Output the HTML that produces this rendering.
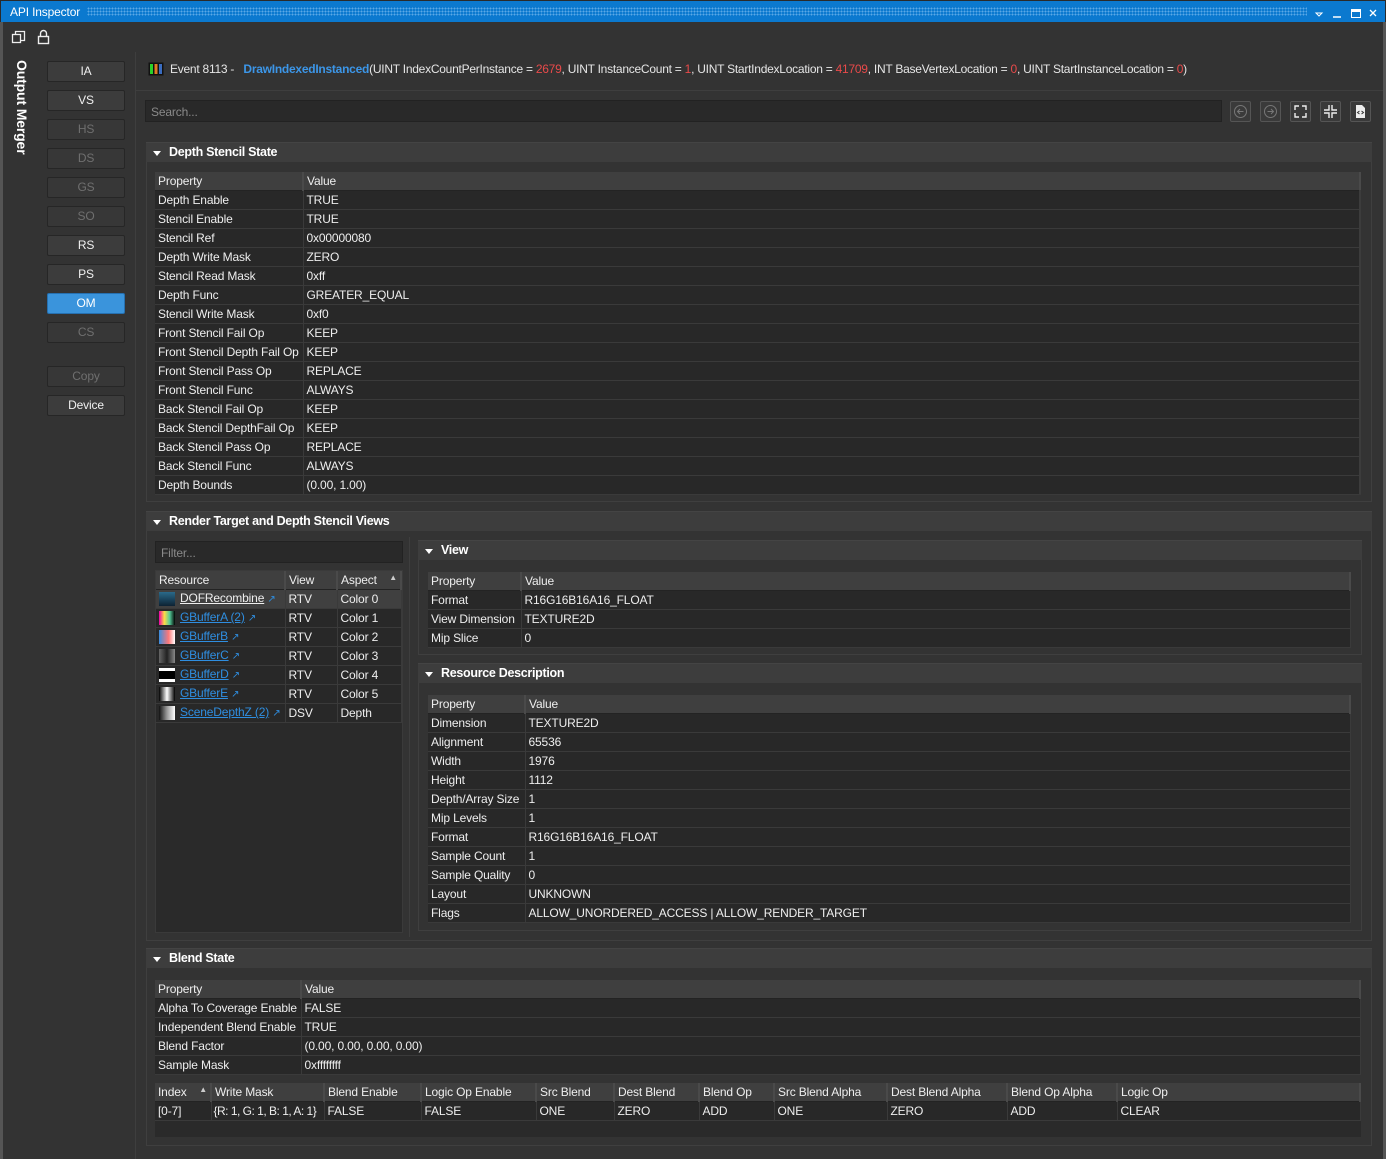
<!DOCTYPE html>
<html><head><meta charset="utf-8"><style>
*{box-sizing:border-box;margin:0;padding:0}
body{width:1386px;height:1159px;background:#333;font-family:"Liberation Sans",sans-serif;font-size:12px;color:#e6e6e6;position:relative;overflow:hidden;letter-spacing:-0.15px}
.a{position:absolute}
.title{left:0;top:0;width:1386px;height:22px;background:#0b79cf;border:1px solid #2a2a2a;border-bottom:none}
.title span{position:absolute;left:9px;top:4px;color:#fff;font-size:12px}
.dots{position:absolute;left:86px;top:6px;width:1220px;height:9px;background-image:radial-gradient(#5aa8e6 0.8px,transparent 1px);background-size:3px 3px}
.btn{position:absolute;left:47px;width:78px;height:21px;background:#3c3c3c;border:1px solid #262626;border-radius:2px;text-align:center;line-height:19px;font-size:12px;color:#f0f0f0}
.btn.dis{color:#6f6f6f;background:#373737}
.btn.on{background:#3a94dc;border-color:#2670b0;color:#fff}
.sec{position:absolute;background:#333;border:1px solid #3f3f3f}
.hdr{position:absolute;background:#3d3d3d;height:20px;font-weight:bold;font-size:12.5px;color:#fff;line-height:19px;padding-left:23px;border-top:1px solid #444;letter-spacing:-0.3px}
.hdr:before{content:"";position:absolute;left:7px;top:8px;border-left:4px solid transparent;border-right:4px solid transparent;border-top:5px solid #fff}
table{position:absolute;border-collapse:collapse;table-layout:fixed;font-size:12px}
td{height:19px;border-bottom:1px solid #3a3a3a;border-right:1px solid #3a3a3a;padding:0 3px;white-space:nowrap;overflow:hidden;background:#282828;color:#eee}
tr.h td{background:#3f3f3f;height:18px;border-right:2px solid #4a4a4a;border-bottom:1px solid #232323}
.lnk{color:#2f8ee0;text-decoration:underline}
.ar{color:#2f8ee0;font-size:10px}
.r{color:#e84a4a}
.tb{position:absolute;top:101px;width:21px;height:21px;border:1px solid #555;background:#3a3a3a;border-radius:2px}
.thumb{display:inline-block;width:16px;height:14px;vertical-align:middle;margin-right:5px}
</style></head><body>
<div class="a" style="left:0;top:22px;width:3px;height:1137px;background:#555"></div>
<div class="a" style="left:1383px;top:22px;width:3px;height:1137px;background:#555"></div>
<div class="a title"><span>API Inspector</span><div class="dots"></div>
<svg class="a" style="left:1312px;top:6px" width="70" height="12"><path d="M3 6h6l-3 3z" fill="none" stroke="#fff"/><path d="M20 10h8" stroke="#fff" stroke-width="1.5"/><rect x="38.5" y="2.5" width="9" height="8" fill="none" stroke="#fff"/><rect x="38" y="2" width="10" height="3" fill="#fff"/><path d="M57 3l6 6M63 3l-6 6" stroke="#fff" stroke-width="1.3"/></svg></div>
<svg class="a" style="left:10px;top:28px" width="45" height="18"><rect x="2.5" y="6.5" width="8" height="8" fill="none" stroke="#eee" stroke-width="1.3"/><path d="M5.5 6.5v-3h9v9h-4" fill="none" stroke="#eee" stroke-width="1.3"/><rect x="28.5" y="8.5" width="10" height="7" fill="none" stroke="#eee" stroke-width="1.4"/><path d="M30.5 8.5v-3a3 3 0 0 1 6 0v3" fill="none" stroke="#eee" stroke-width="1.4"/></svg>
<div class="a" style="left:135px;top:52px;width:1px;height:1107px;background:#3e3e3e"></div>
<div class="a" style="left:6px;top:60px;width:30px;height:110px"><div style="transform:rotate(90deg);transform-origin:0 0;position:absolute;left:24px;top:0;white-space:nowrap;font-weight:bold;font-size:14px;color:#fff">Output Merger</div></div>
<div class="btn" style="top:61px">IA</div>
<div class="btn" style="top:90px">VS</div>
<div class="btn dis" style="top:119px">HS</div>
<div class="btn dis" style="top:148px">DS</div>
<div class="btn dis" style="top:177px">GS</div>
<div class="btn dis" style="top:206px">SO</div>
<div class="btn" style="top:235px">RS</div>
<div class="btn" style="top:264px">PS</div>
<div class="btn on" style="top:293px">OM</div>
<div class="btn dis" style="top:322px">CS</div>
<div class="btn dis" style="top:366px">Copy</div>
<div class="btn" style="top:395px">Device</div>

<svg class="a" style="left:148px;top:62px" width="16" height="14"><rect x="0.5" y="0.5" width="15" height="13" fill="#111"/><rect x="2" y="2" width="3" height="10" fill="#2ad12a"/><rect x="6.5" y="2" width="3" height="10" fill="#e07b22"/><rect x="11" y="2" width="3" height="10" fill="#3a6cc0"/></svg>
<div class="a" style="left:170px;top:62px;white-space:nowrap;letter-spacing:-0.25px">Event 8113 - &nbsp; <span style="color:#3c96e8;font-weight:bold">DrawIndexedInstanced</span>(UINT IndexCountPerInstance = <span class="r">2679</span>, UINT InstanceCount = <span class="r">1</span>, UINT StartIndexLocation = <span class="r">41709</span>, INT BaseVertexLocation = <span class="r">0</span>, UINT StartInstanceLocation = <span class="r">0</span>)</div>
<div class="a" style="left:136px;top:90px;width:1247px;height:1px;background:#3e3e3e"></div>
<div class="a" style="left:145px;top:100px;width:1077px;height:22px;background:#292929;border:1px solid #222;color:#8a8a8a;padding:4px 5px">Search...</div>
<div class="tb" style="left:1230px"><svg width="19" height="19"><circle cx="9.5" cy="9.5" r="6" fill="none" stroke="#777"/><path d="M12.5 9.5h-6M9 7l-2.5 2.5L9 12" fill="none" stroke="#777"/></svg></div>
<div class="tb" style="left:1260px"><svg width="19" height="19"><circle cx="9.5" cy="9.5" r="6" fill="none" stroke="#777"/><path d="M6.5 9.5h6M10 7l2.5 2.5L10 12" fill="none" stroke="#777"/></svg></div>
<div class="tb" style="left:1290px"><svg width="19" height="19"><path d="M4 8V4h4M11 4h4v4M15 11v4h-4M8 15H4v-4" fill="none" stroke="#eee" stroke-width="1.4"/></svg></div>
<div class="tb" style="left:1320px"><svg width="19" height="19"><path d="M8 3v5H3M11 3v5h5M16 11h-5v5M3 11h5v5" fill="none" stroke="#eee" stroke-width="1.4"/></svg></div>
<div class="tb" style="left:1350px"><svg width="19" height="19"><path d="M5 3h6l3 3v10H5z" fill="#eee"/><path d="M8.5 9l-2 1.5 2 1.5M10.5 9l2 1.5-2 1.5" fill="none" stroke="#333"/></svg></div>

<!-- Depth Stencil -->
<div class="sec" style="left:146px;top:142px;width:1226px;height:360px"></div>
<div class="hdr" style="left:146px;top:142px;width:1226px">Depth Stencil State</div>
<table style="left:155px;top:172px;width:1206px"><colgroup><col style="width:148px"><col></colgroup>
<tr class="h"><td>Property</td><td>Value</td></tr>
<tr><td>Depth Enable</td><td>TRUE</td></tr>
<tr><td>Stencil Enable</td><td>TRUE</td></tr>
<tr><td>Stencil Ref</td><td>0x00000080</td></tr>
<tr><td>Depth Write Mask</td><td>ZERO</td></tr>
<tr><td>Stencil Read Mask</td><td>0xff</td></tr>
<tr><td>Depth Func</td><td>GREATER_EQUAL</td></tr>
<tr><td>Stencil Write Mask</td><td>0xf0</td></tr>
<tr><td>Front Stencil Fail Op</td><td>KEEP</td></tr>
<tr><td>Front Stencil Depth Fail Op</td><td>KEEP</td></tr>
<tr><td>Front Stencil Pass Op</td><td>REPLACE</td></tr>
<tr><td>Front Stencil Func</td><td>ALWAYS</td></tr>
<tr><td>Back Stencil Fail Op</td><td>KEEP</td></tr>
<tr><td>Back Stencil DepthFail Op</td><td>KEEP</td></tr>
<tr><td>Back Stencil Pass Op</td><td>REPLACE</td></tr>
<tr><td>Back Stencil Func</td><td>ALWAYS</td></tr>
<tr><td>Depth Bounds</td><td>(0.00, 1.00)</td></tr>
</table>
<div class="a" style="left:1359px;top:190px;width:2px;height:304px;background:#3c3c3c"></div>

<!-- Render target -->
<div class="sec" style="left:146px;top:511px;width:1226px;height:430px"></div>
<div class="hdr" style="left:146px;top:511px;width:1226px">Render Target and Depth Stencil Views</div>
<div class="a" style="left:155px;top:541px;width:248px;height:22px;background:#292929;border:1px solid #222;color:#8a8a8a;padding:4px 5px">Filter...</div>
<div class="a" style="left:155px;top:570px;width:248px;height:363px;background:#2a2a2a;border:1px solid #3a3a3a"></div>
<div class="a" style="left:409px;top:537px;width:1px;height:400px;background:#3e3e3e"></div>
<table style="left:156px;top:571px;width:246px"><colgroup><col style="width:129px"><col style="width:52px"><col></colgroup>
<tr class="h"><td>Resource</td><td>View</td><td>Aspect <span style="float:right;font-size:8px;color:#ccc">▲</span></td></tr>
<tr><td style="background:#404040"><span class="thumb" style="background:linear-gradient(#2a6a8a,#0d2233)"></span><span style="text-decoration:underline">DOFRecombine</span> <span class="ar">↗</span></td><td style="background:#404040">RTV</td><td style="background:#404040">Color 0</td></tr>
<tr><td><span class="thumb" style="background:linear-gradient(90deg,#e0a,#fd4,#5c9,#000)"></span><span class="lnk">GBufferA (2)</span> <span class="ar">↗</span></td><td>RTV</td><td>Color 1</td></tr>
<tr><td><span class="thumb" style="background:linear-gradient(90deg,#3a8ee0,#f77 60%,#fff)"></span><span class="lnk">GBufferB</span> <span class="ar">↗</span></td><td>RTV</td><td>Color 2</td></tr>
<tr><td><span class="thumb" style="background:linear-gradient(90deg,#666,#222,#888)"></span><span class="lnk">GBufferC</span> <span class="ar">↗</span></td><td>RTV</td><td>Color 3</td></tr>
<tr><td><span class="thumb" style="background:linear-gradient(#fff 20%,#000 20%,#000 80%,#fff 80%)"></span><span class="lnk">GBufferD</span> <span class="ar">↗</span></td><td>RTV</td><td>Color 4</td></tr>
<tr><td><span class="thumb" style="background:linear-gradient(90deg,#000,#fff,#000)"></span><span class="lnk">GBufferE</span> <span class="ar">↗</span></td><td>RTV</td><td>Color 5</td></tr>
<tr><td><span class="thumb" style="background:linear-gradient(90deg,#111,#999,#fff)"></span><span class="lnk">SceneDepthZ (2)</span> <span class="ar">↗</span></td><td>DSV</td><td>Depth</td></tr>
</table>

<div class="sec" style="left:418px;top:540px;width:944px;height:115px"></div>
<div class="hdr" style="left:418px;top:540px;width:944px">View</div>
<table style="left:428px;top:572px;width:923px"><colgroup><col style="width:93px"><col></colgroup>
<tr class="h"><td>Property</td><td>Value</td></tr>
<tr><td>Format</td><td>R16G16B16A16_FLOAT</td></tr>
<tr><td>View Dimension</td><td>TEXTURE2D</td></tr>
<tr><td>Mip Slice</td><td>0</td></tr>
</table>
<div class="sec" style="left:418px;top:663px;width:944px;height:268px"></div>
<div class="hdr" style="left:418px;top:663px;width:944px">Resource Description</div>
<table style="left:428px;top:695px;width:923px"><colgroup><col style="width:97px"><col></colgroup>
<tr class="h"><td>Property</td><td>Value</td></tr>
<tr><td>Dimension</td><td>TEXTURE2D</td></tr>
<tr><td>Alignment</td><td>65536</td></tr>
<tr><td>Width</td><td>1976</td></tr>
<tr><td>Height</td><td>1112</td></tr>
<tr><td>Depth/Array Size</td><td>1</td></tr>
<tr><td>Mip Levels</td><td>1</td></tr>
<tr><td>Format</td><td>R16G16B16A16_FLOAT</td></tr>
<tr><td>Sample Count</td><td>1</td></tr>
<tr><td>Sample Quality</td><td>0</td></tr>
<tr><td>Layout</td><td>UNKNOWN</td></tr>
<tr><td>Flags</td><td>ALLOW_UNORDERED_ACCESS | ALLOW_RENDER_TARGET</td></tr>
</table>

<!-- Blend -->
<div class="sec" style="left:146px;top:948px;width:1226px;height:198px"></div>
<div class="hdr" style="left:146px;top:948px;width:1226px">Blend State</div>
<table style="left:155px;top:980px;width:1206px"><colgroup><col style="width:146px"><col></colgroup>
<tr class="h"><td>Property</td><td>Value</td></tr>
<tr><td>Alpha To Coverage Enable</td><td>FALSE</td></tr>
<tr><td>Independent Blend Enable</td><td>TRUE</td></tr>
<tr><td>Blend Factor</td><td>(0.00, 0.00, 0.00, 0.00)</td></tr>
<tr><td>Sample Mask</td><td>0xffffffff</td></tr>
</table>
<div class="a" style="left:155px;top:1083px;width:1206px;height:54px;background:#2a2a2a"></div>
<table style="left:155px;top:1083px;width:1206px"><colgroup><col style="width:56px"><col style="width:113px"><col style="width:97px"><col style="width:115px"><col style="width:78px"><col style="width:85px"><col style="width:75px"><col style="width:113px"><col style="width:120px"><col style="width:110px"><col></colgroup>
<tr class="h"><td>Index <span style="float:right;font-size:8px;color:#ccc">▲</span></td><td>Write Mask</td><td>Blend Enable</td><td>Logic Op Enable</td><td>Src Blend</td><td>Dest Blend</td><td>Blend Op</td><td>Src Blend Alpha</td><td>Dest Blend Alpha</td><td>Blend Op Alpha</td><td>Logic Op</td></tr>
<tr><td>[0-7]</td><td style="letter-spacing:-0.5px;padding:0 2px">{R: 1, G: 1, B: 1, A: 1}</td><td>FALSE</td><td>FALSE</td><td>ONE</td><td>ZERO</td><td>ADD</td><td>ONE</td><td>ZERO</td><td>ADD</td><td>CLEAR</td></tr>
</table>
</body></html>
